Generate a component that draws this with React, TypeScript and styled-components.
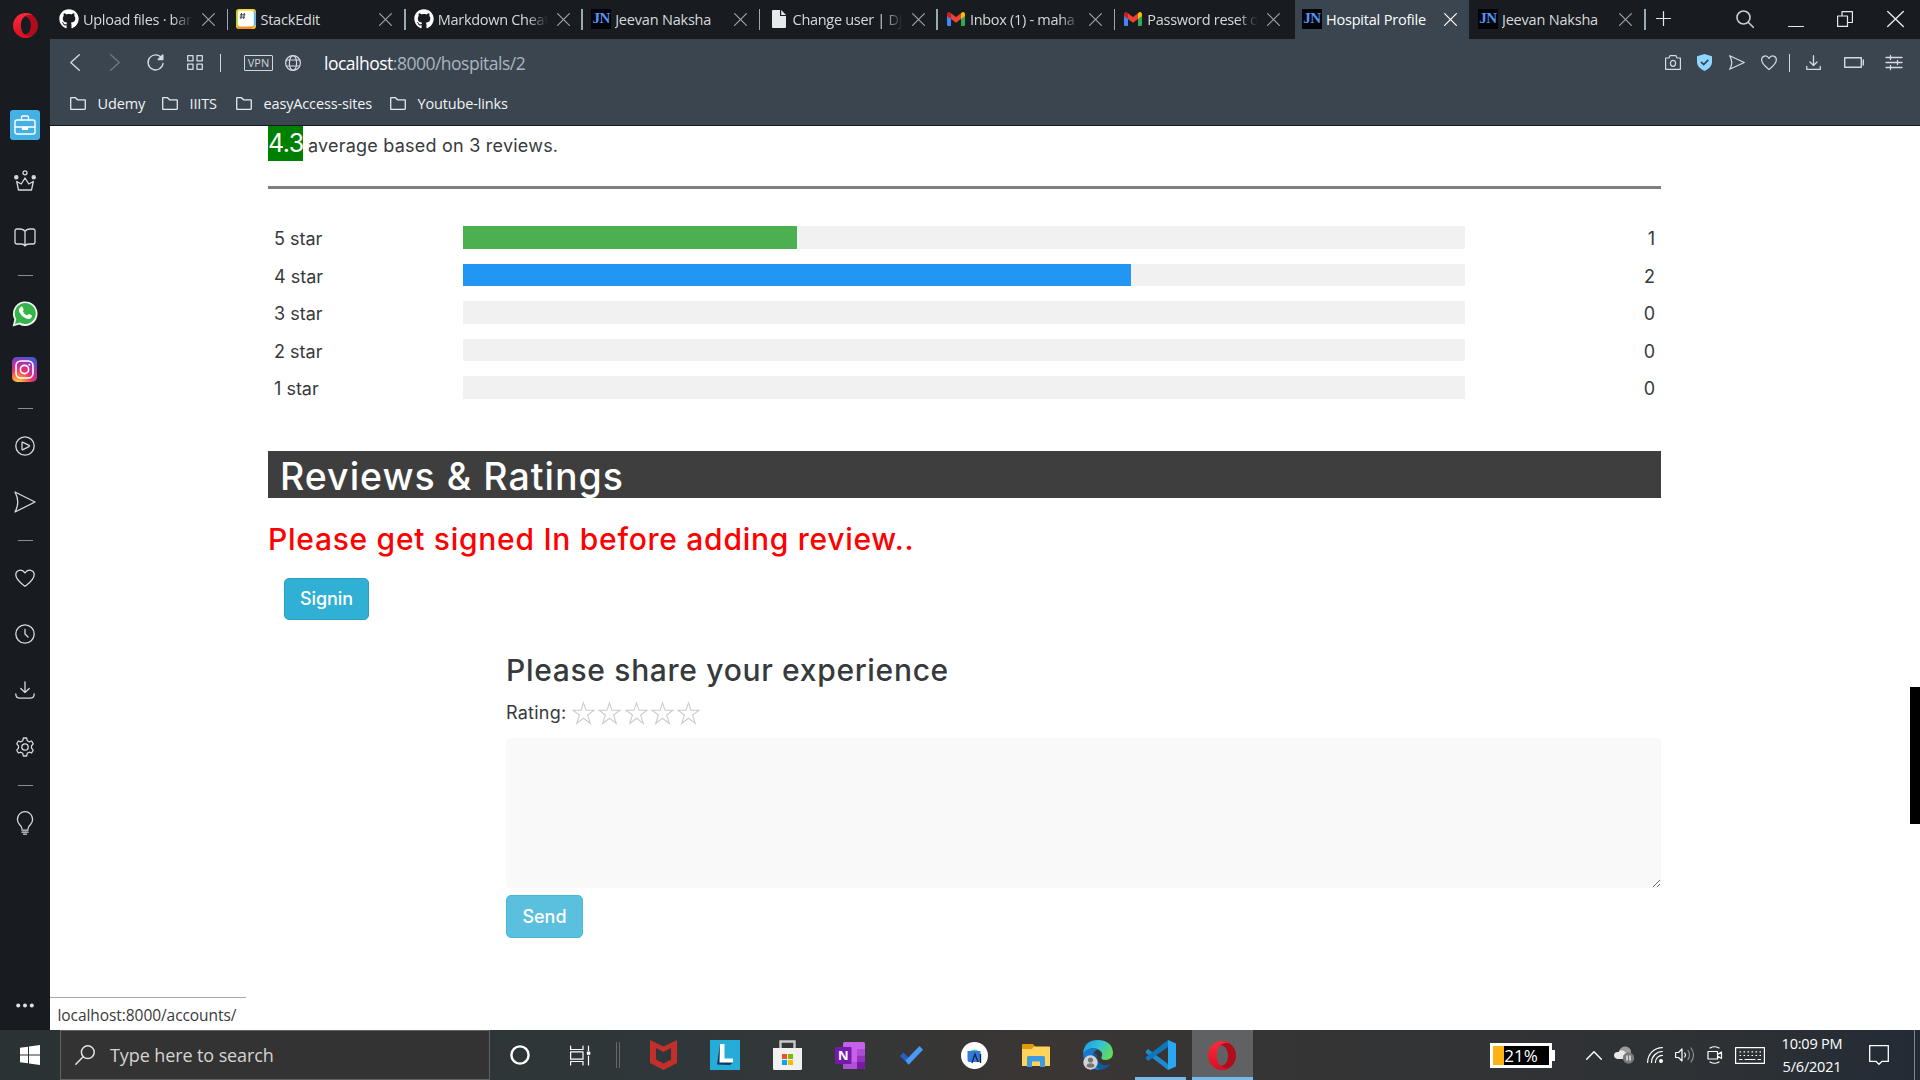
import React from "react";
import styled, { createGlobalStyle } from "styled-components";
import { FaGithub } from "react-icons/fa";

const UI = '"Open Sans", "Noto Sans", sans-serif';
const BODY = 'Inter, "Noto Sans", sans-serif';

const Global = createGlobalStyle`
  * { box-sizing: border-box; }
  body { margin: 0; background: #fff; overflow: hidden; }
  h1, h2, p { margin: 0; }
  button { font: inherit; }
`;

const Screen = styled.div`
  width: 1920px;
  height: 1080px;
  display: flex;
  flex-direction: column;
  overflow: hidden;
  font-family: ${UI};
`;

const Browser = styled.div`
  height: 1030px;
  display: flex;
`;

/* ---------- generic drawing ---------- */

const Svg = styled.svg`
  display: block;
  flex: none;
  overflow: visible;
`;

type IconProps = {
  w: number;
  h: number;
  box?: string;
  stroke?: string;
  sw?: number;
  children: React.ReactNode;
};

const Icon = ({ w, h, box, stroke = "#d5dadf", sw = 1.3, children }: IconProps) => (
  <Svg
    width={w}
    height={h}
    viewBox={box ?? `0 0 ${w} ${h}`}
    fill="none"
    stroke={stroke}
    strokeWidth={sw}
    strokeLinecap="round"
    strokeLinejoin="round"
    preserveAspectRatio="none"
  >
    {children}
  </Svg>
);

const Heart = ({ w, h, sw }: { w: number; h: number; sw?: number }) => (
  <Icon w={w} h={h} box="0 0 20 18" sw={sw}>
    <path d="M10 17.3C6.5 14.6.8 10.9.8 5.8.8 1 7 -.8 10 4 13-.8 19.2 1 19.2 5.8 19.2 10.9 13.5 14.6 10 17.3Z" />
  </Icon>
);

const Plane = ({ w, h, sw }: { w: number; h: number; sw?: number }) => (
  <Icon w={w} h={h} box="0 0 22 22" sw={sw}>
    <path d="M1 1L21 11L1 21C4.6 14.5 4.6 7.5 1 1Z" />
  </Icon>
);

const OperaRing = ({ w, h }: { w: number; h: number }) => (
  <Svg width={w} height={h} viewBox="0 0 28 28" preserveAspectRatio="none">
    <defs>
      <linearGradient id="opA" x1="0" x2="0" y1="0" y2="1">
        <stop offset="0" stopColor="#ff2a3c" />
        <stop offset="1" stopColor="#d80f22" />
      </linearGradient>
    </defs>
    <path fill="#b00c1b" d="M14 0A14 14 0 0 1 14 28C10 28 8 24 8 22C14 27 20 22 20 14C20 6 14 1 8 6C8 4 10 0 14 0Z" />
    <path
      fill="url(#opA)"
      fillRule="evenodd"
      d="M14 0A14 14 0 0 0 14 28C17 28 20 27 22 25.500C14 28 8.800 22 8.800 14C8.800 6 14 0 22 2.500C20 1 17 0 14 0Z"
    />
  </Svg>
);

/* ---------- side bar ---------- */

const Side = styled.aside`
  width: 50px;
  display: flex;
  flex-direction: column;
  align-items: center;
  background: #181b20;
`;

const SideLogo = styled.div`
  height: 97px;
  padding-top: 13px;
`;

const SideSlot = styled.div`
  height: 56.3px;
  padding: 0 1px 1px 0;
  display: grid;
  place-items: center;
`;

const SideRule = styled.div`
  height: 19.7px;
  display: flex;
  align-items: center;
  &::after {
    content: "";
    width: 15px;
    height: 1px;
    background: #7f8f9c;
  }
`;

const Workspace = styled.div`
  width: 30px;
  height: 30px;
  border-radius: 3px;
  background: #45b0e6;
  display: grid;
  place-items: center;
`;

const SideMore = styled.div`
  margin-top: auto;
  padding-bottom: 22px;
`;

const Sidebar = () => (
  <Side>
    <SideLogo>
      <OperaRing w={25} h={25} />
    </SideLogo>
    <SideSlot>
      <Workspace>
        <Icon w={22} h={20} stroke="#fff" sw={1.4}>
          <rect x="1" y="5" width="20" height="14" rx="2" />
          <path d="M7.500 5V2.200q0-1.200 1.200-1.200h4.600q1.200 0 1.200 1.200V5M1 12h20" />
          <path d="M8.500 12.500h5v1.800h-5z" fill="#fff" />
        </Icon>
      </Workspace>
    </SideSlot>
    <SideSlot>
      <Icon w={22} h={21}>
        <circle cx="11" cy="2.800" r="2" />
        <circle cx="2.300" cy="7.300" r="1.600" fill="#d5dadf" />
        <circle cx="19.700" cy="7.300" r="1.600" fill="#d5dadf" />
        <path d="M4.500 20H17.500L19.300 11.500L14.800 14L11 8L7.200 14L2.700 11.500Z" />
      </Icon>
    </SideSlot>
    <SideSlot>
      <Icon w={22} h={19}>
        <path d="M11 3.500Q9.500 1 6 1H3Q1 1 1 3V14Q1 16 3 16H7Q10 16 11 18Q12 16 15 16H19Q21 16 21 14V3Q21 1 19 1H16Q12.500 1 11 3.500V17" />
      </Icon>
    </SideSlot>
    <SideRule />
    <SideSlot>
      <Svg width="26" height="27" viewBox="0 0 26 27">
        <path d="M.6 26.400L2.400 19.500A12.300 12.300 0 1 1 7.200 24.400Z" fill="#f2f5f2" />
        <path d="M3 24L4.300 19A10.500 10.500 0 1 1 8 22.600Z" fill="#35b44a" />
        <path d="M9 6.800c.7-.4 1.400-.3 1.700.4l1 2.200c.2.600-.7 1.400-1 1.900 1 2 2.500 3.300 4.600 4.200.6-.5 1.200-1.800 1.900-1.500l2.300 1.200c.8.500.2 2-.4 2.700-1.300 1.300-3 1.300-4.700.7-3.400-1.200-6.300-4-7.400-7.300-.5-1.800.5-3.600 2-4.500Z" fill="#fff" />
      </Svg>
    </SideSlot>
    <SideSlot>
      <Svg width="25" height="25" viewBox="0 0 26 26" fill="none">
        <defs>
          <radialGradient id="ig" cx=".25" cy="1.050" r="1.100">
            <stop offset="0" stopColor="#ffd45e" />
            <stop offset=".25" stopColor="#fb8a3b" />
            <stop offset=".5" stopColor="#e8316b" />
            <stop offset=".78" stopColor="#a832b4" />
            <stop offset="1" stopColor="#4a55d0" />
          </radialGradient>
        </defs>
        <rect width="26" height="26" rx="5" fill="url(#ig)" />
        <rect x="4.200" y="4.200" width="17.600" height="17.600" rx="5" stroke="#fff" strokeWidth="1.700" />
        <circle cx="13" cy="13" r="4.300" stroke="#fff" strokeWidth="1.700" />
        <circle cx="18" cy="8" r="1.100" fill="#fff" />
      </Svg>
    </SideSlot>
    <SideRule />
    <SideSlot>
      <Icon w={20} h={20}>
        <circle cx="10" cy="10" r="9.200" />
        <path d="M7 6.800Q7 5.800 8 6.300L14 9.400Q15 10 14 10.600L8 13.700Q7 14.200 7 13.200Z" />
      </Icon>
    </SideSlot>
    <SideSlot>
      <Plane w={22} h={22} />
    </SideSlot>
    <SideRule />
    <SideSlot>
      <Heart w={20} h={18} />
    </SideSlot>
    <SideSlot>
      <Icon w={20} h={20}>
        <circle cx="10" cy="10" r="9.200" />
        <path d="M10 5.500V10L13 13" />
      </Icon>
    </SideSlot>
    <SideSlot>
      <Icon w={20} h={18}>
        <path d="M10 .8V11.500M5.800 7.500L10 11.500L14.200 7.500M.8 13Q.8 17.200 5 17.200H15Q19.200 17.200 19.200 13" />
      </Icon>
    </SideSlot>
    <SideSlot>
      <Icon w={18} h={20}>
        <path d="M7.400 1H10.600L11.300 3.700L13.200 4.800L15.600 4L17.200 6.800L15.500 8.900V11.100L17.200 13.200L15.600 16L13.200 15.200L11.300 16.300L10.600 19H7.400L6.700 16.300L4.800 15.200L2.400 16L.8 13.200L2.500 11.100V8.900L.8 6.800L2.400 4L4.800 4.800L6.700 3.700Z" />
        <circle cx="9" cy="10" r="3.200" />
      </Icon>
    </SideSlot>
    <SideRule />
    <SideSlot>
      <Icon w={18} h={22}>
        <path d="M6 17Q6 14.500 3.500 12.500A7.600 7.600 0 1 1 14.500 12.500Q12 14.500 12 17" />
        <path d="M6 18.200h6M6 20.200h6M7.500 22.200h3" />
      </Icon>
    </SideSlot>
    <SideMore>
      <Svg width="18" height="5" viewBox="0 0 18 5" fill="#dfe3e7">
        <circle cx="2.200" cy="2.500" r="2" />
        <circle cx="9" cy="2.500" r="2" />
        <circle cx="15.800" cy="2.500" r="2" />
      </Svg>
    </SideMore>
  </Side>
);

/* ---------- tabs ---------- */

const Main = styled.div`
  flex: 1;
  min-width: 0;
  display: flex;
  flex-direction: column;
`;

const TabStrip = styled.div`
  height: 39px;
  display: flex;
  background: #181b20;
`;

const TabBox = styled.div<{ $active?: boolean; $w: number; $end: number }>`
  width: ${(p) => p.$w}px;
  height: 39px;
  display: flex;
  align-items: center;
  padding: 0 ${(p) => p.$end}px 0 ${(p) => (p.$active ? 7 : 9)}px;
  background: ${(p) => (p.$active ? "#3a4550" : "transparent")};
  color: ${(p) => (p.$active ? "#ffffff" : "#d6d9dc")};
`;

const TabEdge = styled.div<{ $hidden?: boolean }>`
  width: 1.5px;
  height: 21px;
  margin: 9px -0.750px 0;
  background: #9aa9b6;
  visibility: ${(p) => (p.$hidden ? "hidden" : "visible")};
`;

const Favicon = styled.span`
  width: 20px;
  height: 20px;
  margin-right: 4px;
  margin-top: -1px;
  flex: none;
  display: grid;
  place-items: center;
`;

const JnMark = styled.span`
  width: 20px;
  height: 20px;
  background: #02040a;
  color: #5596f5;
  font: 700 15px/19px "Liberation Serif", serif;
  letter-spacing: -0.6px;
  text-align: center;
`;

const TabLabel = styled.span<{ $fade?: boolean }>`
  flex: 1;
  min-width: 0;
  overflow: hidden;
  white-space: nowrap;
  font-size: 14.5px;
  letter-spacing: ${(p) => (p.$fade ? -0.3 : -0.2)}px;
  line-height: 22px;
  margin-right: ${(p) => (p.$fade ? 7 : 4)}px;
  mask-image: ${(p) => (p.$fade ? "linear-gradient(90deg, #000 80%, transparent 98%)" : "none")};
`;

const CloseX = ({ color = "#9ea3a8" }: { color?: string }) => (
  <Icon w={13} h={13} stroke={color} sw={1.2}>
    <path d="M.6.6L12.400 12.400M12.400.6L.6 12.400" />
  </Icon>
);

const Jn = () => <JnMark>JN</JnMark>;

const Gmail = () => (
  <Svg width="18" height="14" viewBox="0 0 18 14">
    <path d="M0 2.500L4 5.500V14H1.200Q0 14 0 12.800Z" fill="#4285f4" />
    <path d="M18 2.500L14 5.500V14H16.800Q18 14 18 12.800Z" fill="#34a853" />
    <path d="M14 1.200Q16-.8 17.500.8Q18 1.400 18 2.500V4L14 7Z" fill="#fbbc04" />
    <path d="M4 1.200Q2-.8.5.8Q0 1.400 0 2.500V4L4 7Z" fill="#c5221f" />
    <path d="M4 1.200L9 5L14 1.200V7L9 10.800L4 7Z" fill="#ea4335" />
  </Svg>
);

const StackEdit = () => (
  <Svg width="20" height="20" viewBox="0 0 20 20">
    <rect width="20" height="20" rx="3" fill="#ffd323" />
    <path d="M17 2Q20 2 20 6V16L16 18Z" fill="#65b5f2" />
    <path d="M1 16H18Q18 20 15 20H4Q1 20 1 16Z" fill="#f78f1c" />
    <path d="M0 4Q0 1 2 1V18Q0 17 0 15Z" fill="#b8d222" />
    <rect x="1.800" y="1.800" width="16" height="15.800" rx="2" fill="#fff" />
    <path d="M5.500 4L4.800 10M8.300 4L7.600 10M4 5.800H9.300M3.700 8.200H9" stroke="#444" strokeWidth="1" />
  </Svg>
);

const PageFile = () => (
  <Svg width="14" height="18" viewBox="0 0 14 18">
    <path d="M1 0H8V6H14V17Q14 18 13 18H1Q0 18 0 17V1Q0 0 1 0Z" fill="#e6e9ec" />
    <path d="M9.200 0L14 4.900H9.200Z" fill="#e6e9ec" />
  </Svg>
);

type TabData = {
  icon: React.ReactNode;
  label: string;
  fade?: boolean;
  active?: boolean;
  w?: number;
  end?: number;
};

const tabs: TabData[] = [
  { icon: <FaGithub size={20} color="#fff" />, label: "Upload files · bar", fade: true },
  { icon: <StackEdit />, label: "StackEdit", end: 13 },
  { icon: <FaGithub size={20} color="#fff" />, label: "Markdown Cheat", fade: true },
  { icon: <Jn />, label: "Jeevan Naksha", end: 13 },
  { icon: <PageFile />, label: "Change user | Dj", fade: true },
  { icon: <Gmail />, label: "Inbox (1) - maha", fade: true },
  { icon: <Gmail />, label: "Password reset o", fade: true, w: 180.6, end: 15 },
  { icon: <Jn />, label: "Hospital Profile", active: true, w: 174, end: 11.5 },
  { icon: <Jn />, label: "Jeevan Naksha", w: 176.2, end: 13 },
];

const NewTab = styled.div`
  height: 37px;
  padding-left: 10.500px;
  display: flex;
  align-items: center;
`;

const WindowTools = styled.div`
  flex: 1;
  display: flex;
  justify-content: flex-end;
  align-items: center;
  gap: 33.500px;
  padding-right: 16.500px;
  height: 37px;
`;

const Tabs = () => (
  <TabStrip>
    {tabs.map((t, i) => (
      <React.Fragment key={i}>
        <TabBox $w={t.w ?? 177.4} $active={t.active} $end={t.end ?? 12}>
          <Favicon>{t.icon}</Favicon>
          <TabLabel $fade={t.fade}>{t.label}</TabLabel>
          <CloseX color={t.active ? "#fff" : undefined} />
        </TabBox>
        <TabEdge $hidden={i === 6 || i === 7} />
      </React.Fragment>
    ))}
    <NewTab>
      <Icon w={15} h={15} stroke="#e6e9ec" sw={1.2}>
        <path d="M7.500.5V14.500M.5 7.500H14.500" />
      </Icon>
    </NewTab>
    <WindowTools>
      <Icon w={18} h={18} stroke="#c9ced3" sw={1.6}>
        <circle cx="7.500" cy="7.500" r="6.500" />
        <path d="M12.200 12.200L17.300 17.300" />
      </Icon>
      <Icon w={16} h={16} stroke="#e6e9ec" sw={1.2}>
        <path d="M.5 15.500H15.500" />
      </Icon>
      <Icon w={16} h={16} stroke="#e6e9ec" sw={1.2}>
        <path d="M.6 5H10.500V15.400H.6ZM5 5V.6H15.400V11.500H10.500" />
      </Icon>
      <Icon w={17} h={16} stroke="#e6e9ec" sw={1.4}>
        <path d="M.7.500L16.300 15.500M16.300.5L.7 15.500" />
      </Icon>
    </WindowTools>
  </TabStrip>
);

/* ---------- address and bookmark rows ---------- */

const Chrome = styled.div`
  height: 87px;
  display: flex;
  flex-direction: column;
  background: #3a4550;
  border-bottom: 1px solid #15181d;
`;

const AddressRow = styled.div`
  height: 47px;
  display: flex;
  align-items: center;
  padding: 0 18px 0 20px;
`;

const Group = styled.div<{ $gap: number; $before?: string }>`
  display: flex;
  align-items: center;
  gap: ${(p) => p.$gap}px;
  margin-left: ${(p) => p.$before ?? "0"};
`;

const Bar = styled.i<{ $m: string }>`
  width: 1px;
  height: 18px;
  margin: ${(p) => p.$m};
  background: #cfd6dc;
`;

const Vpn = styled.span`
  width: 29px;
  height: 16px;
  border: 1px solid #d0d6dc;
  border-radius: 1px;
  color: #d0d6dc;
  font-size: 11px;
  line-height: 14px;
  text-align: center;
  margin-right: 12px;
`;

const Url = styled.span`
  margin-left: 23px;
  font-size: 17.5px;
  letter-spacing: -0.5px;
  color: #aab5bf;
  b { font-weight: 400; color: #fff; }
`;

const BookmarkRow = styled.div`
  height: 34px;
  display: flex;
  align-items: center;
  padding-left: 20px;
`;

const Bookmark = styled.span<{ $w: number }>`
  width: ${(p) => p.$w}px;
  display: flex;
  align-items: center;
  gap: 11.500px;
  font-size: 14.5px;
  letter-spacing: -0.15px;
  white-space: nowrap;
  color: #f1f3f5;
`;

const bookmarks = [
  { name: "Udemy", w: 92 },
  { name: "IIITS", w: 74 },
  { name: "easyAccess-sites", w: 154 },
  { name: "Youtube-links", w: 130 },
];

const Navigation = () => (
  <Chrome>
    <AddressRow>
      <Group $gap={30}>
        <Icon w={10} h={17} sw={1.4}><path d="M9.300.7L.8 8.500L9.300 16.300" /></Icon>
        <Icon w={10} h={17} stroke="#6d7984" sw={1.4}><path d="M.7.7L9.200 8.500L.7 16.300" /></Icon>
      </Group>
      <Group $gap={23} $before="27px">
        <Icon w={17} h={17} sw={1.4}>
          <path d="M15 4.500A7.500 7.500 0 1 0 16 9.500" />
          <path d="M15.800 1V5.600H11.200Z" fill="#d5dadf" />
        </Icon>
        <Icon w={16} h={15} sw={1.3}>
          <path d="M.7.7H6V5.800H.7ZM10 .7H15.300V5.800H10ZM.7 9.200H6V14.300H.7ZM10 9.200H15.300V14.300H10Z" />
        </Icon>
      </Group>
      <Bar $m="0 23px 0 17px" />
      <Vpn>VPN</Vpn>
      <Icon w={16} h={16} sw={1.2}>
        <circle cx="8" cy="8" r="7.400" />
        <ellipse cx="8" cy="8" rx="3.600" ry="7.400" />
        <path d="M1.300 5H14.700M1.300 11H14.700" />
      </Icon>
      <Url><b>localhost</b>:8000/hospitals/2</Url>
      <Group $gap={16.5} $before="auto">
        <Icon w={16} h={15} sw={1.2}>
          <path d="M.6 3H4L5 .7H11L12 3H15.400V14.300H.6Z" />
          <ellipse cx="8" cy="8.300" rx="2.600" ry="3" />
        </Icon>
        <Svg width="15" height="17" viewBox="0 0 15 17">
          <path d="M7.500 0L15 2.200V8.500Q14.500 14 7.500 17Q.5 14 0 8.500V2.200Z" fill="#8fd6ff" />
          <path d="M4 7.800L6.700 10.500L11.300 5.800" fill="none" stroke="#2e4454" strokeWidth="1.700" />
        </Svg>
        <Plane w={16} h={15} sw={1.7} />
        <Heart w={16} h={15} sw={1.5} />
      </Group>
      <Bar $m="0 16px 0 12px" />
      <Group $gap={22.5}>
        <Icon w={15} h={15}>
          <path d="M7.500.7V10.500M4 7L7.500 10.500L11 7M.7 11.500V14.300H14.300V11.500" />
        </Icon>
        <Icon w={20} h={11} sw={1.4}>
          <path d="M.7.7H17.300V10.300H.7ZM19.300 3V8" />
        </Icon>
        <Icon w={16} h={15}>
          <path d="M0 2.500H16M0 7.500H16M0 12.500H16M4.500.5V4.500M11.500 5.500V9.500M4.500 10.500V14.500" />
        </Icon>
      </Group>
    </AddressRow>
    <BookmarkRow>
      {bookmarks.map((b) => (
        <Bookmark key={b.name} $w={b.w}>
          <Icon w={16} h={13} stroke="#e6e9ec">
            <path d="M.7 1.200Q.7.700 1.200.7H5.500L7.500 2.800H14.800Q15.300 2.800 15.300 3.300V11.800Q15.300 12.300 14.800 12.300H1.200Q.7 12.300.7 11.800Z" />
          </Icon>
          {b.name}
        </Bookmark>
      ))}
    </BookmarkRow>
  </Chrome>
);

/* ---------- page ---------- */

const Page = styled.main`
  flex: 1;
  min-height: 0;
  position: relative;
  padding: 0 259px 0 218px;
  display: flex;
  flex-direction: column;
  font-family: ${BODY};
  color: #373a3c;
  font-size: 18px;
`;

const Average = styled.p`
  height: 35px;
  display: flex;
  gap: 5px;
  line-height: 40px;
  letter-spacing: 0.22px;
  white-space: nowrap;
`;

const Score = styled.span`
  width: 35px;
  height: 35px;
  line-height: 34px;
  background: #008000;
  color: #fff;
  font-size: 25px;
  letter-spacing: -0.6px;
  text-align: center;
`;

const Rule = styled.hr`
  width: 100%;
  height: 3px;
  margin: 25px 0 37px;
  border: 0;
  flex: none;
  background: #808080;
`;

const StarRow = styled.div`
  height: 37.5px;
  display: grid;
  grid-template-columns: 195px 1002px 1fr;
  align-items: start;
  line-height: 25px;
`;

const StarName = styled.span`
  padding-left: 6px;
`;

const Track = styled.div`
  height: 22.5px;
  background: #f1f1f1;
`;

const Fill = styled.div<{ $color: string }>`
  height: 100%;
  background: ${(p) => p.$color};
`;

const Count = styled.span`
  text-align: right;
  padding-right: 6px;
`;

const Banner = styled.h1`
  height: 47px;
  margin-top: 37.5px;
  padding-left: 12px;
  flex: none;
  background: #3e3e3e;
  color: #fff;
  font-size: 37.5px;
  font-weight: 500;
  line-height: 52px;
  letter-spacing: 1px;
`;

const Warning = styled.h2`
  margin-top: 21px;
  color: #ff0000;
  font-size: 30px;
  font-weight: 500;
  line-height: 40px;
  letter-spacing: 0.72px;
  white-space: nowrap;
`;

const Button = styled.button<{ $w: number; $bg: string; $edge: string }>`
  width: ${(p) => p.$w}px;
  height: 43px;
  padding: 0;
  border: 1px solid ${(p) => p.$edge};
  border-radius: 5px;
  background: ${(p) => p.$bg};
  color: #fff;
  font-size: 18px;
  font-weight: 500;
  line-height: 38px;
  letter-spacing: -0.05px;
`;

const SignIn = styled(Button)`
  height: 42px;
  margin: 19px 0 0 16px;
`;

const Form = styled.section`
  margin: 30px 0 0 238px;
  display: flex;
  flex-direction: column;
`;

const FormTitle = styled.h2`
  font-size: 30px;
  font-weight: 500;
  line-height: 40px;
  letter-spacing: 0.68px;
  color: #373a3c;
`;

const RatingRow = styled.div`
  height: 48px;
  display: flex;
  align-items: center;
  padding-bottom: 3px;
`;

const RatingLabel = styled.span`
  width: 66px;
  letter-spacing: 0.25px;
`;

const Stars = styled.div`
  display: flex;
  gap: 3.3px;
`;

const Comment = styled.textarea`
  height: 150px;
  border: 0;
  border-radius: 4px;
  background: #f9f9f9;
  resize: vertical;
  margin-bottom: 7px;
  outline: none;
`;

const StatusBubble = styled.div`
  position: absolute;
  left: 0;
  bottom: 0;
  width: 196px;
  height: 33px;
  padding-left: 7.5px;
  border-top: 1px solid #a8a8a8;
  background: #fff;
  color: #3a3a3a;
  font: 15.5px/35px ${UI};
  letter-spacing: -0.07px;
  white-space: nowrap;
`;

const ScrollThumb = styled.div`
  position: absolute;
  right: 0;
  top: 561px;
  width: 10px;
  height: 137px;
  background: #000;
`;

const ratings = [
  { stars: 5, count: 1, color: "#4caf50" },
  { stars: 4, count: 2, color: "#2196f3" },
  { stars: 3, count: 0, color: "#00bcd4" },
  { stars: 2, count: 0, color: "#ff9800" },
  { stars: 1, count: 0, color: "#f44336" },
];
const total = ratings.reduce((n, r) => n + r.count, 0);

const Profile = () => (
  <Page>
    <Average>
      <Score>4.3</Score>
      <span>average based on {total} reviews.</span>
    </Average>
    <Rule />
    {ratings.map((r) => (
      <StarRow key={r.stars}>
        <StarName>{r.stars} star</StarName>
        <Track>
          <Fill $color={r.color} style={{ width: `${(r.count / total) * 100}%` }} />
        </Track>
        <Count>{r.count}</Count>
      </StarRow>
    ))}
    <Banner>Reviews &amp; Ratings</Banner>
    <Warning>Please get signed In before adding review..</Warning>
    <SignIn $w={85} $bg="#31b0d5" $edge="#2a9fc1">Signin</SignIn>
    <Form>
      <FormTitle>Please share your experience</FormTitle>
      <RatingRow>
        <RatingLabel>Rating:</RatingLabel>
        <Stars>
          {[0, 1, 2, 3, 4].map((n) => (
            <Icon key={n} w={23} h={24} stroke="#cccccc" sw={1.1}>
              <path strokeLinejoin="miter" d="M11.500 1.800L14 9.300H22L15.600 14L18.300 22.500L11.500 17.200L4.700 22.500L7.400 14L1 9.300H9Z" />
            </Icon>
          ))}
        </Stars>
      </RatingRow>
      <Comment />
      <Button $w={77} $bg="#5bc0de" $edge="#46b8da">Send</Button>
    </Form>
    <StatusBubble>localhost:8000/accounts/</StatusBubble>
    <ScrollThumb />
  </Page>
);

/* ---------- task bar ---------- */

const Task = styled.footer`
  height: 50px;
  display: flex;
  background: linear-gradient(90deg, #2b3233 0%, #30373a 36%, #3a3634 54%, #333435 72%, #2d3135 90%, #232b35 100%);
  color: #fff;
`;

const TaskSlot = styled.div<{ $w: number; $active?: boolean; $line?: number }>`
  width: ${(p) => p.$w}px;
  height: 50px;
  display: grid;
  place-items: center;
  background: ${(p) => (p.$active ? "#5f6163" : "transparent")};
  background-image: ${(p) => (p.$line ? "linear-gradient(#76b9ed, #76b9ed)" : "none")};
  background-repeat: no-repeat;
  background-position: 50% 100%;
  background-size: ${(p) => p.$line ?? 0}px 3px;
`;

const Search = styled.div`
  width: 430px;
  height: 50px;
  padding-left: 14px;
  display: flex;
  align-items: center;
  gap: 15px;
  border: 1px solid #606364;
  background: #333333;
  color: #d4d4d4;
  font-size: 18px;
  letter-spacing: -0.1px;
`;

const Grip = styled.div`
  width: 22px;
  display: flex;
  align-items: center;
  gap: 2px;
  padding-left: 6px;
  &::before, &::after {
    content: "";
    width: 1px;
    height: 26px;
    background: #65696b;
  }
`;

const Tray = styled.div`
  flex: 1;
  display: flex;
  align-items: center;
  justify-content: flex-end;
`;

const Battery = styled.div`
  width: 62px;
  height: 25px;
  margin-right: 34px;
  border: 3px solid #fff;
  background: linear-gradient(90deg, #ffb214 11px, #000 11px);
  font-size: 17px;
  line-height: 19px;
  text-align: center;
  position: relative;
  &::after {
    content: "";
    position: absolute;
    right: -6px;
    top: 4px;
    width: 3px;
    height: 11px;
    background: #fff;
  }
`;

const TrayIcons = styled.div`
  display: flex;
  align-items: center;
  gap: 12px;
`;

const Clock = styled.div`
  width: 78px;
  margin-left: 8px;
  font-size: 14.5px;
  line-height: 23px;
  letter-spacing: -0.2px;
  text-align: center;
  white-space: nowrap;
`;

const Action = styled.div`
  width: 45px;
  margin-left: 18px;
`;

const Desk = styled.div`
  width: 6px;
  height: 50px;
  border-left: 1px solid #82868a;
`;

const OneN = styled.text`
  font: 700 13px ${UI};
  fill: #fff;
`;

const Taskbar = () => (
  <Task>
    <TaskSlot $w={60}>
      <Svg width="20" height="20" viewBox="0 0 20 20" fill="#fff">
        <path d="M0 2.800L8 1.700V9.500H0ZM9 1.500L20 0V9.500H9ZM0 10.500H8V18.300L0 17.200ZM9 10.500H20V20L9 18.500Z" />
      </Svg>
    </TaskSlot>
    <Search>
      <Icon w={20} h={20} stroke="#e2e2e2" sw={1.5}>
        <circle cx="12.800" cy="7.200" r="6.400" />
        <path d="M8.200 11.800L.8 19.200" />
      </Icon>
      Type here to search
    </Search>
    <TaskSlot $w={60}>
      <Icon w={20} h={20} stroke="#fff" sw={2.4}>
        <circle cx="10" cy="10" r="8.600" />
      </Icon>
    </TaskSlot>
    <TaskSlot $w={60}>
      <Icon w={20} h={19} stroke="#fff" sw={1.2}>
        <path d="M.6 0V3.500H13V0M.6 5.800H13V13.200H.6ZM.6 19V15.500H13V19M18.500 0V4.500M18.500 10V19" />
        <path d="M17.400 6.200h2.300v2h-2.300z" fill="#fff" />
      </Icon>
    </TaskSlot>
    <Grip />
    <TaskSlot $w={62.2}>
      <Svg width="27" height="30" viewBox="0 0 27 30">
        <path d="M0 0L13.500 6.500L27 0V23L13.500 30L0 23ZM6 8V19.500L13.500 23.500L21 19.500V8L13.500 12Z" fill="#c3302c" fillRule="evenodd" />
      </Svg>
    </TaskSlot>
    <TaskSlot $w={62.2}>
      <Svg width="30" height="30" viewBox="0 0 30 30">
        <rect width="30" height="30" fill="#27abd8" />
        <path d="M10 4L7 24.500L20 25L23 22.500L11 21Z" fill="#0d3b5e" />
        <path d="M10 4H14.500V18.500H23V22.500H9.500Z" fill="#fff" />
      </Svg>
    </TaskSlot>
    <TaskSlot $w={62.2}>
      <Svg width="29" height="30" viewBox="0 0 29 30">
        <path d="M7.500 10V1.500H21.500V10" fill="none" stroke="#c9c9c9" strokeWidth="2.400" />
        <path d="M0 8H29V28.500Q29 30 27.500 30H1.500Q0 30 0 28.500Z" fill="#f1f1f1" />
        <path d="M9 14h5v5h-5z" fill="#f25022" />
        <path d="M15 14h5v5h-5z" fill="#7fba00" />
        <path d="M9 20h5v5h-5z" fill="#00a4ef" />
        <path d="M15 20h5v5h-5z" fill="#ffb900" />
      </Svg>
    </TaskSlot>
    <TaskSlot $w={62.2}>
      <Svg width="30" height="27" viewBox="0 0 30 27">
        <rect x="8" width="22" height="27" rx="1.500" fill="#c861ea" />
        <path d="M22 7H30V13.500H22Z" fill="#ae4bd5" />
        <path d="M22 13.500H30V20H22Z" fill="#9332bf" />
        <path d="M8 20H30V25.500Q30 27 28.500 27H9.500Q8 27 8 25.500Z" fill="#b04fd8" />
        <path d="M22 20H30V25.500Q30 27 28.500 27H22Z" fill="#7719aa" />
        <rect y="5" width="16.500" height="17" rx="1" fill="#7719aa" />
        <OneN x="3" y="18.300">N</OneN>
      </Svg>
    </TaskSlot>
    <TaskSlot $w={62.2}>
      <Svg width="23" height="19" viewBox="0 0 23 19">
        <path d="M3.500 6.500L11.500 14.500L8.500 18.500L0 10Z" fill="#2361c8" />
        <path d="M19.500 0L23 3.800L8.600 18.700L5.500 14.500Z" fill="#4c98f5" />
      </Svg>
    </TaskSlot>
    <TaskSlot $w={62.2}>
      <Svg width="27" height="27" viewBox="0 0 27 27">
        <circle cx="13.500" cy="13.500" r="13.500" fill="#fff" />
        <path d="M9 9.500A5.500 4.500 0 0 1 18 9.500Z" fill="#3ddc84" />
        <path d="M6.500 9H19.500V20H8.500Q6.500 20 6.500 18Z" fill="#3478e0" />
        <path d="M11 21L14 12L17 20M19.500 12V21" fill="none" stroke="#14294a" strokeWidth="1.400" />
      </Svg>
    </TaskSlot>
    <TaskSlot $w={62.2}>
      <Svg width="28" height="23" viewBox="0 0 28 23">
        <path d="M1 0H11L13 2.500V6H0V1Q0 0 1 0Z" fill="#e09b0b" />
        <path d="M12 2.500H27Q28 2.500 28 3.500V22H0V5H10Z" fill="#ffd35c" />
        <path d="M5 23V13.500Q5 12 6.500 12H21.500Q23 12 23 13.500V23H18V17.500H10V23Z" fill="#3f9be0" />
      </Svg>
    </TaskSlot>
    <TaskSlot $w={62.2}>
      <Svg width="30" height="30" viewBox="0 0 30 30">
        <defs>
          <linearGradient id="edge" x1="0" y1=".2" x2="1" y2=".6">
            <stop offset="0" stopColor="#1b9de2" />
            <stop offset=".5" stopColor="#35c1d8" />
            <stop offset="1" stopColor="#62dd55" />
          </linearGradient>
        </defs>
        <path d="M.5 15A15 15 0 0 0 15 30Q23 30 27.500 24Q22 26.500 17.500 23.500Q13 20 14 15Q10 10 4 12Z" fill="#12589f" />
        <path d="M0 13Q1.500 0 15 0Q29 .5 30 12.500Q30 19.500 23 20Q17.500 20 18.500 17Q20.500 13.500 17 10.500Q9 5 0 13Z" fill="url(#edge)" />
        <path d="M0 13Q7 6 14.500 9.500Q9 11.500 9.500 18Q10 25 17 29.500Q1 30 0 13Z" fill="#1779cf" />
        <circle cx="7.500" cy="22.500" r="7.200" fill="#d4d4d4" />
        <circle cx="7.500" cy="20" r="2.600" fill="#757575" />
        <path d="M3.500 26.500Q3.500 23.300 7.500 23.300Q11.500 23.300 11.500 26.500Q7.500 29 3.500 26.500Z" fill="#757575" />
      </Svg>
    </TaskSlot>
    <TaskSlot $w={62.2} $line={51}>
      <Svg width="30" height="30" viewBox="0 0 30 30">
        <path d="M0 11L2 9L22 24V30L0 13Q-.5 12 0 11Z" fill="#1f8ad2" />
        <path d="M0 19L2 21L22 7V0L0 17Q-.5 18 0 19Z" fill="#0f75bd" />
        <path d="M22 0L30 3.500V26.500L22 30Z" fill="#29a7f2" />
      </Svg>
    </TaskSlot>
    <TaskSlot $w={61} $active $line={61}>
      <OperaRing w={28} h={29} />
    </TaskSlot>
    <Tray>
      <Battery>21%</Battery>
      <TrayIcons>
        <Icon w={16} h={9} stroke="#fff" sw={1.4}><path d="M.7 8.300L8 .8L15.300 8.300" /></Icon>
        <Svg width="21" height="18" viewBox="0 0 21 18">
          <path d="M5 5Q7 0 12 .5Q17 1.500 17 6V10H5Z" fill="#9c9c9c" />
          <path d="M3.500 13Q0 12.500 0 9Q.5 5.500 4.500 6Q6 3.500 9 4.500L14 8V13Z" fill="#e8e8e8" />
          <circle cx="14.500" cy="12" r="5.700" fill="#7b7b7b" />
          <path d="M13 9.500V14.500M16 9.500V14.500" stroke="#fff" strokeWidth="1.200" />
        </Svg>
        <Icon w={16} h={16} stroke="#fff" sw={1.2}>
          <path d="M.6 15.400A14.800 14.800 0 0 1 15.400.6M4.500 15.400A11 11 0 0 1 15.400 4.500M8.400 15.400A7 7 0 0 1 15.400 8.400" />
          <circle cx="14" cy="14" r="1.400" fill="#fff" />
        </Icon>
        <Icon w={20} h={16} stroke="#fff" sw={1.2}>
          <path d="M.6 5.500H3.500L7 2V14L3.500 10.500H.6Z" />
          <path d="M9.800 6Q11.300 8 9.800 10" />
          <path d="M13 3.500Q16 8 13 12.500M16 1Q21 8 16 15" stroke="#8f9294" />
        </Icon>
        <Icon w={16} h={18} stroke="#fff" sw={1.2}>
          <path d="M1 5.500H10.500V13H1ZM10.500 8.500L14.500 6V12.500L10.500 10M3 2Q7.500-.5 12 2M3 16Q7.500 18.500 12 16" />
        </Icon>
        <Icon w={30} h={17} stroke="#fff" sw={1.2}>
          <path d="M.6.6H29.400V16.400H.6Z" />
          <path strokeDasharray="1.600 2.400" strokeLinecap="butt" d="M4.500 4.800H26M4.500 8.500H26" />
          <path d="M4.500 12.500H7M10 12.500H20M23 12.500H25.500" />
        </Icon>
      </TrayIcons>
      <Clock>
        10:09 PM
        <br />
        5/6/2021
      </Clock>
      <Action>
        <Icon w={20} h={20} stroke="#fff" sw={1.3}>
          <path strokeLinejoin="miter" d="M.7.7H19.300V16.300H13L10 19.300L7 16.300H.7Z" />
        </Icon>
      </Action>
      <Desk />
    </Tray>
  </Task>
);

export default function App() {
  return (
    <Screen>
      <Global />
      <Browser>
        <Sidebar />
        <Main>
          <Tabs />
          <Navigation />
          <Profile />
        </Main>
      </Browser>
      <Taskbar />
    </Screen>
  );
}
